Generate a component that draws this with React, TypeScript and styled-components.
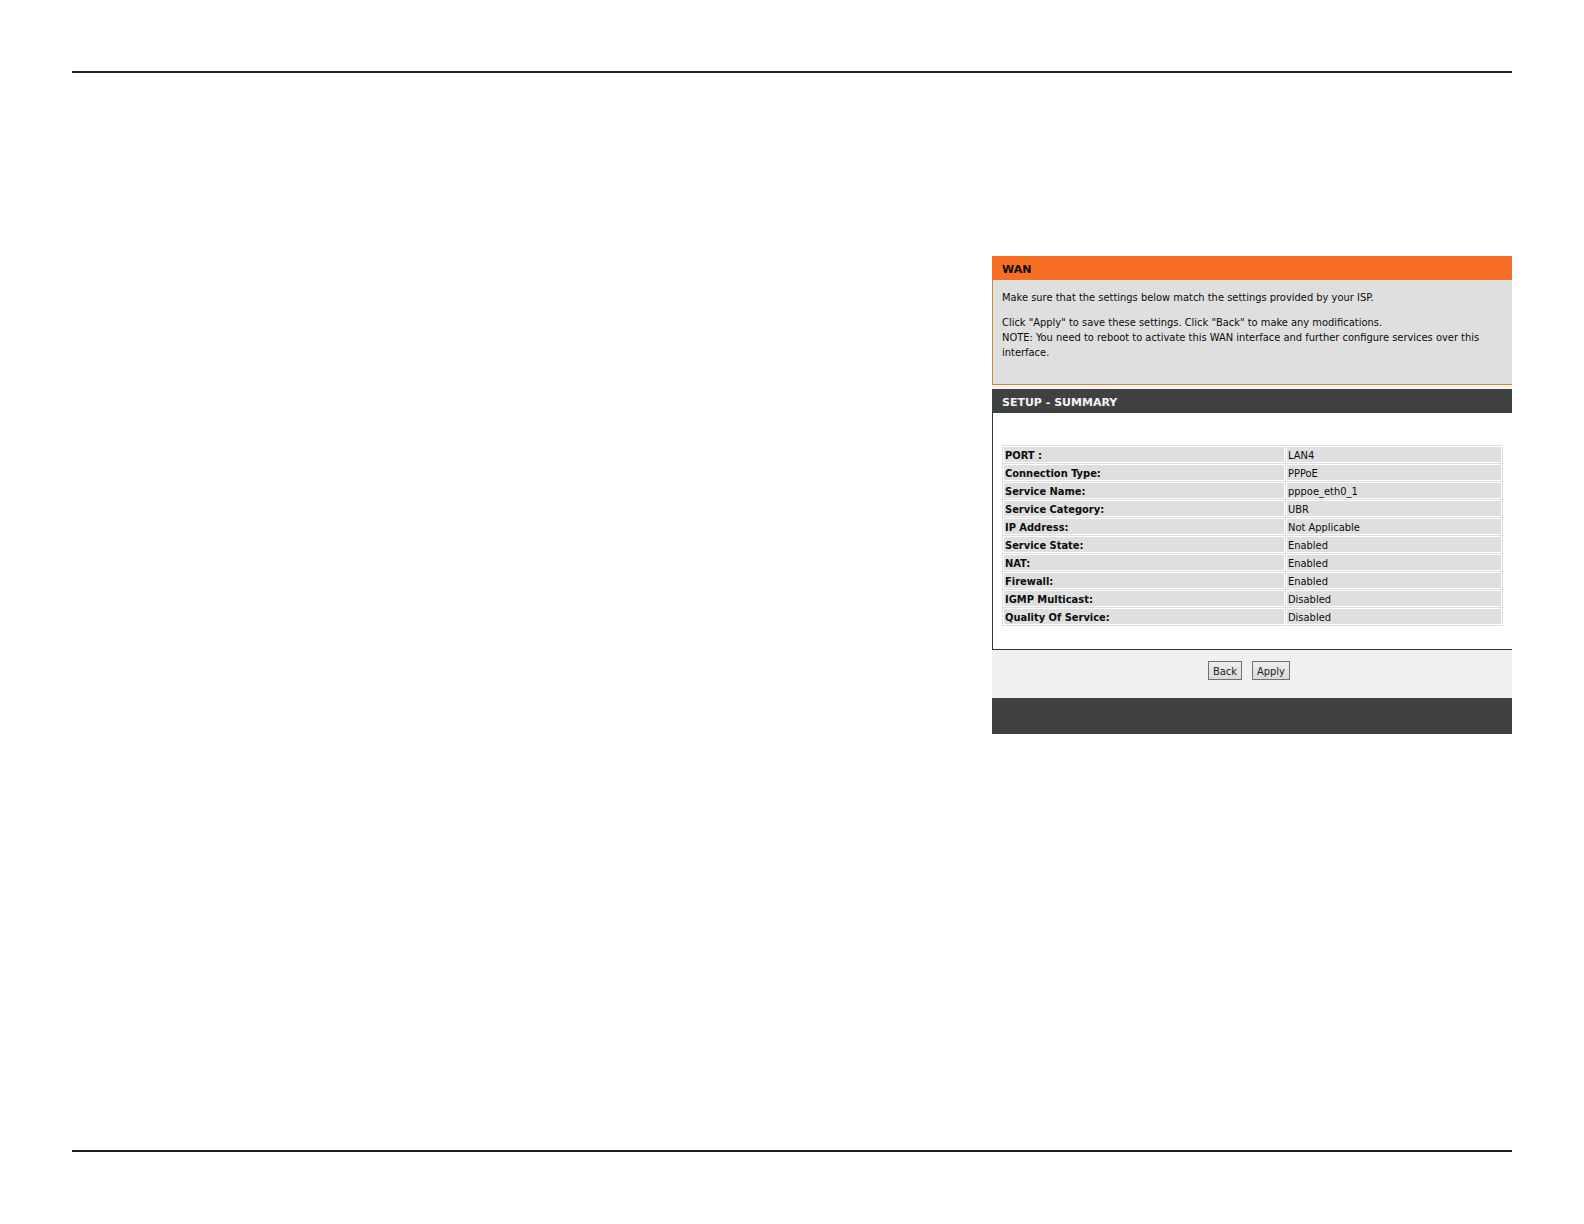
import React from "react";
import styled, { createGlobalStyle } from "styled-components";

const GlobalStyle = createGlobalStyle`
  *, *::before, *::after {
    box-sizing: border-box;
  }

  body {
    margin: 0;
    background: #ffffff;
    color: #0c0c0c;
    font-family: "DejaVu Sans Condensed", "Noto Sans", sans-serif;
    font-size: 11px;
    line-height: 15px;
  }
`;

const Page = styled.div`
  display: flex;
  flex-direction: column;
  min-height: 100vh;
  padding: 71px 72px 72px;
`;

const Sheet = styled.main`
  flex: 1;
  display: flex;
  justify-content: flex-end;
  align-items: flex-start;
  padding: 183px 0 24px;
  border-top: 2px solid #231f20;
  border-bottom: 2px solid #231f20;
`;

const Panel = styled.div`
  flex: 0 1 520px;
  min-width: 0;
  background: #f0f0f0;
`;

const Section = styled.section<{ $line: string; $fill: string }>`
  border-left: 1px solid ${(p) => p.$line};
  border-bottom: 1px solid ${(p) => p.$line};
  background: ${(p) => p.$fill};

  & + & {
    margin-top: 4px;
  }
`;

const SectionTitle = styled.h2<{ $fill: string; $ink: string }>`
  margin: 0 0 0 -1px;
  padding: 6px 10px 3px;
  background: ${(p) => p.$fill};
  color: ${(p) => p.$ink};
  font-family: "DejaVu Sans", sans-serif;
  font-size: 11px;
  font-weight: bold;
`;

const Notes = styled.div`
  padding: 10px 10px 24px 9px;
`;

const Note = styled.p`
  margin: 0;

  & + & {
    margin-top: 10px;
  }
`;

const SummaryBody = styled.div`
  padding: 32px 9px 23px 9px;
`;

const SummaryTable = styled.table`
  width: 100%;
  border-collapse: collapse;
  table-layout: fixed;

  th,
  td {
    height: 18px;
    padding: 2px 2px 0;
    border: 1px solid #dedede;
    background: #dfdfdf;
    box-shadow: inset 0 0 0 1px #ffffff;
    text-align: left;
  }

  th {
    font-weight: bold;
  }

  td {
    width: 217px;
  }
`;

const Actions = styled.div`
  display: flex;
  justify-content: center;
  gap: 10px;
  padding: 11px 16px 18px 10px;
`;

const ActionButton = styled.button`
  height: 19px;
  padding: 1px 4px 0;
  border: 1px solid #707070;
  border-radius: 0;
  background: linear-gradient(#eeeeee, #dadada);
  color: #222222;
  font: inherit;
`;

const Footer = styled.footer`
  height: 36px;
  background: #404241;
`;

const settings: [string, string][] = [
  ["PORT :", "LAN4"],
  ["Connection Type:", "PPPoE"],
  ["Service Name:", "pppoe_eth0_1"],
  ["Service Category:", "UBR"],
  ["IP Address:", "Not Applicable"],
  ["Service State:", "Enabled"],
  ["NAT:", "Enabled"],
  ["Firewall:", "Enabled"],
  ["IGMP Multicast:", "Disabled"],
  ["Quality Of Service:", "Disabled"],
];

export default function App() {
  return (
    <>
      <GlobalStyle />
      <Page>
        <Sheet>
          <Panel>
            <Section $line="#d08a3c" $fill="#dfdfdf">
              <SectionTitle $fill="#f66f25" $ink="#0c0c0c">WAN</SectionTitle>
              <Notes>
                <Note>Make sure that the settings below match the settings provided by your ISP.</Note>
                <Note>
                  Click "Apply" to save these settings. Click "Back" to make any modifications.
                  <br />
                  NOTE: You need to reboot to activate this WAN interface and further configure services over this
                  interface.
                </Note>
              </Notes>
            </Section>
            <Section $line="#333333" $fill="#ffffff">
              <SectionTitle $fill="#404241" $ink="#f4f4f4">SETUP - SUMMARY</SectionTitle>
              <SummaryBody>
                <SummaryTable>
                  <tbody>
                    {settings.map(([name, value]) => (
                      <tr key={name}>
                        <th scope="row">{name}</th>
                        <td>{value}</td>
                      </tr>
                    ))}
                  </tbody>
                </SummaryTable>
              </SummaryBody>
            </Section>
            <Actions>
              <ActionButton type="button">Back</ActionButton>
              <ActionButton type="button">Apply</ActionButton>
            </Actions>
            <Footer />
          </Panel>
        </Sheet>
      </Page>
    </>
  );
}
